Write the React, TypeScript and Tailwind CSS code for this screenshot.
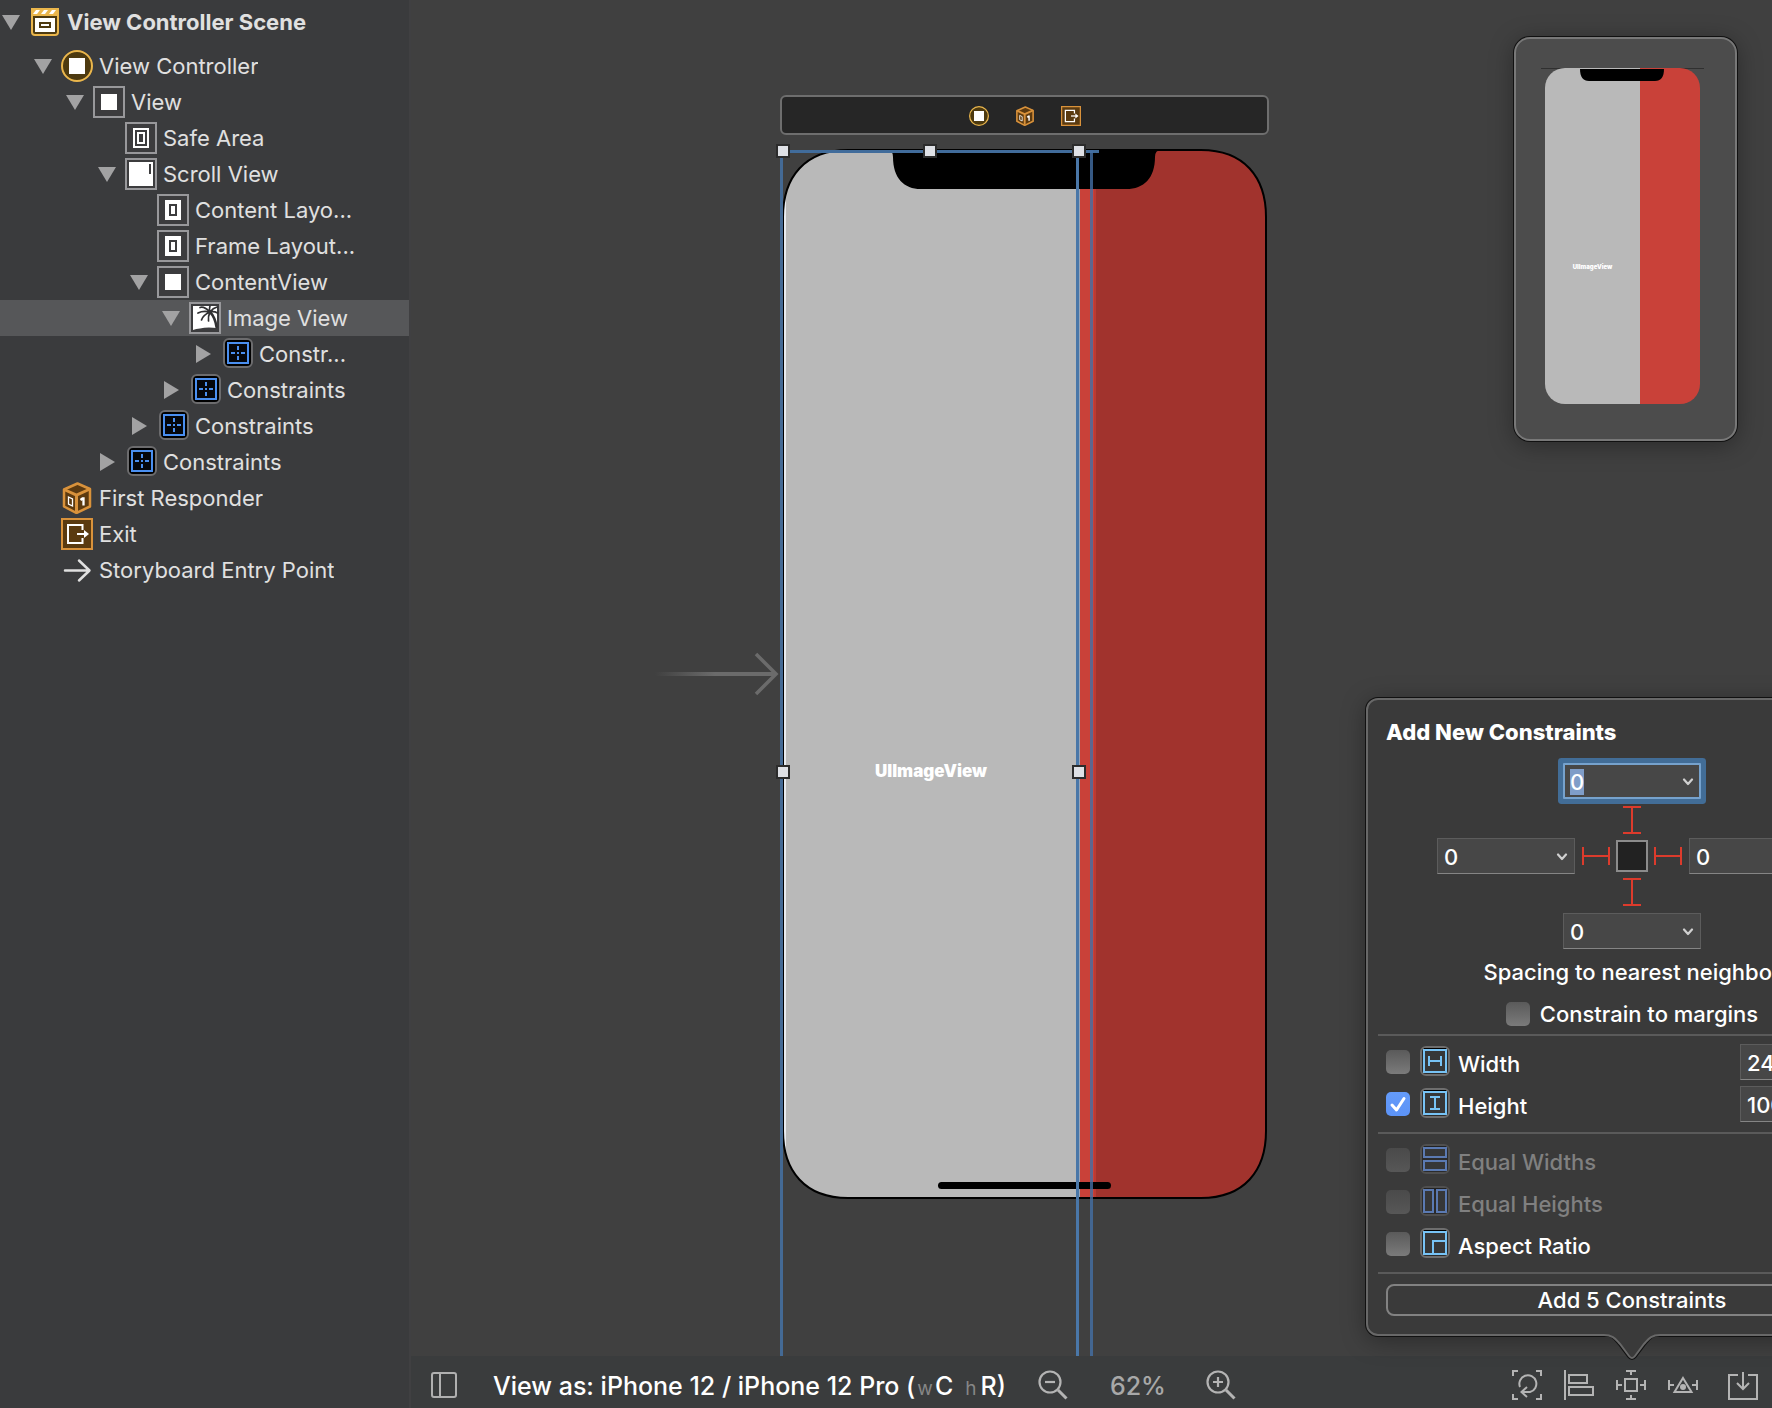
import { useEffect, useRef } from "react";
import type { ReactNode } from "react";

type Kind =
  | "scene" | "controller" | "view" | "safe" | "scroll" | "guide" | "image"
  | "constraints" | "responder" | "exit" | "entry";

function Frame({ children }: { children: ReactNode }) {
  return (
    <>
      <rect x="1" y="1" width="30" height="30" fill="#3c3c3e" stroke="#98989b" strokeWidth="2" />
      {children}
    </>
  );
}

function CubeShape() {
  return (
    <>
      <path d="M16.500 1.500 L29 7 V24.500 L15.500 31 L3 24.500 V7.500 Z" fill="#5c3a10" stroke="#d9923b" strokeWidth="2.500" strokeLinejoin="round" />
      <path d="M3 7.500 L15.500 13 L29 7 M15.500 13 V30" fill="none" stroke="#d9923b" strokeWidth="3" />
      <path d="M7.500 15 L11.500 17 V24 L7.500 22 Z" fill="none" stroke="#fff" strokeWidth="1.300" />
      <path d="M19.500 18 L21.500 16.500 H22.500 V23.500" fill="none" stroke="#fff" strokeWidth="2.300" />
    </>
  );
}

function ExitShape() {
  return (
    <>
      <rect x="1" y="1" width="30" height="30" fill="#5a3a10" stroke="#d9923b" strokeWidth="2" />
      <path d="M21.500 12 V7 H7 V25 H21.500 V20" fill="none" stroke="#fff" strokeWidth="2" />
      <path d="M16 16 H26" fill="none" stroke="#fff" strokeWidth="2" />
      <path d="M23 12 L28 16 L23 20 Z" fill="#fff" />
    </>
  );
}

function ControllerShape() {
  return (
    <>
      <circle cx="16" cy="16" r="15" fill="#4d3a10" stroke="#eab64c" strokeWidth="2" />
      <rect x="8" y="8" width="16" height="16" fill="#fff" />
    </>
  );
}

const shapes: Record<Kind, ReactNode> = {
  scene: (
    <>
      <path d="M2 2 H30 V26 Q30 30 26 30 H6 Q2 30 2 26 Z" fill="#eab64c" />
      <path d="M4 8 L7 4 H11 L8 8 Z M12 8 L15 4 H19 L16 8 Z M20 8 L23 4 H27 L24 8 Z" fill="#fff" />
      <path d="M4 10 H28 V26 Q28 28 26 28 H6 Q4 28 4 26 Z" fill="#4d3a10" />
      <rect x="6" y="12" width="20" height="14" fill="#fff" />
      <rect x="11" y="17" width="10" height="4" fill="#fff" stroke="#4d3a10" strokeWidth="2" />
    </>
  ),
  controller: <ControllerShape />,
  view: <Frame><rect x="8" y="8" width="16" height="16" fill="#fff" /></Frame>,
  safe: (
    <Frame>
      <rect x="9" y="7" width="14" height="18" fill="none" stroke="#fff" strokeWidth="2" />
      <rect x="13" y="11" width="6" height="10" fill="none" stroke="#fff" strokeWidth="2" />
    </Frame>
  ),
  scroll: (
    <Frame>
      <rect x="4" y="4" width="24" height="24" fill="#fff" />
      <rect x="24" y="6" width="2" height="10" fill="#3c3c3e" />
    </Frame>
  ),
  guide: (
    <Frame>
      <rect x="8" y="6" width="16" height="20" fill="#fff" />
      <rect x="13" y="11" width="6" height="10" fill="#fff" stroke="#3c3c3e" strokeWidth="2" />
    </Frame>
  ),
  image: (
    <Frame>
      <path d="M4 4 H28 V26 L20 25.500 Q10 26 4 28 Z" fill="#fff" />
      <g fill="none" stroke="#303032" strokeLinecap="round">
        <path d="M21 10 Q26 15 27.500 25" strokeWidth="2.500" />
        <path d="M21 10 Q14 8.500 9 11 M21 10 Q14 13 12.500 18 M21 10 Q19 14 19.500 19 M21 10 Q15 4 11 5.500 M21 10 Q20 6 21 4 M21 10 Q24 6 28 5 M21 10 Q25 9 28.500 11" strokeWidth="1.700" />
      </g>
    </Frame>
  ),
  constraints: (
    <>
      <rect x="3" y="1" width="28" height="28" rx="5" fill="#000" stroke="#6c6c6e" strokeWidth="2" />
      <rect x="7" y="5" width="20" height="20" fill="#05070c" stroke="#4a8ff0" strokeWidth="2" />
      <path d="M17 8 V12 M17 18 V22 M10 15 H14 M20 15 H24 M16 15 H18" fill="none" stroke="#4a8ff0" strokeWidth="2" />
    </>
  ),
  responder: <CubeShape />,
  exit: <ExitShape />,
  entry: <path d="M4 16.500 H28 M18 6.500 L28.500 16.500 L18 26.500" fill="none" stroke="#e0e0e0" strokeWidth="2.500" strokeLinecap="round" strokeLinejoin="round" />,
};

type Node = { label: string; kind: Kind; indent: string; open?: boolean; selected?: boolean };

const nodes: Node[] = [
  { label: "View Controller", kind: "controller", indent: "pl-8", open: true },
  { label: "View", kind: "view", indent: "pl-16", open: true },
  { label: "Safe Area", kind: "safe", indent: "pl-24" },
  { label: "Scroll View", kind: "scroll", indent: "pl-24", open: true },
  { label: "Content Layo...", kind: "guide", indent: "pl-32" },
  { label: "Frame Layout...", kind: "guide", indent: "pl-32" },
  { label: "ContentView", kind: "view", indent: "pl-32", open: true },
  { label: "Image View", kind: "image", indent: "pl-40", open: true, selected: true },
  { label: "Constr...", kind: "constraints", indent: "pl-48", open: false },
  { label: "Constraints", kind: "constraints", indent: "pl-40", open: false },
  { label: "Constraints", kind: "constraints", indent: "pl-32", open: false },
  { label: "Constraints", kind: "constraints", indent: "pl-24", open: false },
  { label: "First Responder", kind: "responder", indent: "pl-8" },
  { label: "Exit", kind: "exit", indent: "pl-8" },
  { label: "Storyboard Entry Point", kind: "entry", indent: "pl-8" },
];

function Disclosure({ open, label }: { open?: boolean; label: string }) {
  if (open === undefined) return <span className="w-[29px] shrink-0" />;
  return (
    <button type="button" aria-label={`Toggle ${label}`} aria-expanded={open} className="w-[29px] shrink-0">
      <svg viewBox="0 0 29 20" className="block h-5 w-[29px]" fill="#a2a2a3">
        {open ? <path d="M2 3 H20 L11 18 Z" /> : <path d="M4 1 L19 10 L4 19 Z" />}
      </svg>
    </button>
  );
}

function TreeRow({ node }: { node: Node }) {
  return (
    <li className={`flex h-9 items-center ${node.indent} ${node.selected ? "bg-[#565759]" : ""}`}>
      <Disclosure open={node.open} label={node.label} />
      <svg viewBox="0 0 32 32" className="mr-1.5 size-8 shrink-0">{shapes[node.kind]}</svg>
      <span className="truncate">{node.label}</span>
    </li>
  );
}

function Sidebar() {
  return (
    <nav aria-label="Document outline" className="w-[411px] shrink-0 border-r-2 border-[#404042] bg-[#3a3b3d] pt-1 text-[22px] leading-9 text-[#e0e0e0]">
      <div className="mb-2 flex h-9 items-center font-bold">
        <Disclosure open label="View Controller Scene" />
        <svg viewBox="0 0 32 32" className="mr-1.5 size-8 shrink-0">{shapes.scene}</svg>
        <span>View Controller Scene</span>
      </div>
      <ul>
        {nodes.map((n, i) => <TreeRow key={i} node={n} />)}
      </ul>
    </nav>
  );
}

function Phone() {
  return (
    <svg viewBox="0 0 486 1050" className="block h-[1050px] w-[486px]">
      <defs>
        <clipPath id="screen">
          <path id="outline" d="M66 1 H419 C462 1 484 28 484 68 V982 C484 1022 462 1049 419 1049 H66 C23 1049 1 1022 1 982 V68 C1 28 23 1 66 1 Z" />
        </clipPath>
      </defs>
      <g clipPath="url(#screen)">
        <rect width="486" height="1050" fill="#b9b9b9" />
        <rect x="1" width="3" height="1050" fill="#e8ebf0" />
        <rect x="296" width="2" height="1050" fill="#9aa4b5" />
        <rect x="298" width="16" height="1050" fill="#c94139" />
        <rect x="312" width="2" height="1050" fill="#bb3a33" />
        <rect x="314" width="172" height="1050" fill="#a1332d" />
        <path d="M105 0 V1 Q111 1 111 8 C111 30 123 41 141 40 H342 C361 41 373 30 373 8 Q373 1 379 1 V0 Z" fill="#000" />
        <rect x="156" y="1033" width="173" height="7" rx="3.500" fill="#000" />
      </g>
      <use href="#outline" fill="none" stroke="#000" strokeWidth="2" />
    </svg>
  );
}

function Handle({ place }: { place: string }) {
  return <span className={`absolute size-[14px] border-2 border-[#2c2c2c] bg-[#dfe1e6] ${place}`} />;
}

function Canvas() {
  return (
    <section aria-label="Canvas" className="relative flex-1 overflow-hidden bg-[#404040]">
      <div className="absolute left-[369px] top-[95px] flex h-10 w-[489px] items-center justify-center gap-[26px] rounded-md border-2 border-[#6e6e6e] bg-[#262626] pt-px">
        <svg viewBox="0 0 32 32" className="size-5"><ControllerShape /></svg>
        <svg viewBox="0 0 32 32" className="size-5"><CubeShape /></svg>
        <svg viewBox="0 0 32 32" className="size-5"><ExitShape /></svg>
      </div>
      <svg viewBox="0 0 124 44" className="absolute left-[244px] top-[652px] h-11 w-[124px]">
        <defs>
          <linearGradient id="fade"><stop offset="0" stopColor="#6b6b6b" stopOpacity="0" /><stop offset="0.500" stopColor="#6b6b6b" /></linearGradient>
        </defs>
        <rect y="20" width="120" height="4" fill="url(#fade)" />
        <path d="M101 2 L121 22 L101 42" fill="none" stroke="#6b6b6b" strokeWidth="3.500" />
      </svg>
      <div className="absolute left-[371px] top-[149px]"><Phone /></div>
      <div className="absolute left-[372px] top-[759px] w-[296px] text-center text-[17px] leading-6 font-black text-white">UIImageView</div>
      <span className="absolute left-[369px] top-[150px] h-[3px] w-[319px] bg-[#416c9b]" />
      <span className="absolute bottom-0 left-[369px] top-[150px] w-[3px] bg-[#446a95]" />
      <span className="absolute bottom-0 left-[665px] top-[150px] w-[3px] bg-[#4a77a8]" />
      <span className="absolute bottom-0 left-[679px] top-[150px] w-[3px] bg-[#446fa5]/80" />
      <Handle place="left-[365px] top-[144px]" />
      <Handle place="left-[512px] top-[144px]" />
      <Handle place="left-[661px] top-[144px]" />
      <Handle place="left-[365px] top-[765px]" />
      <Handle place="left-[661px] top-[765px]" />
      <Minimap />
    </section>
  );
}

function Minimap() {
  return (
    <div className="absolute right-[35px] top-[37px] flex h-[404px] w-[223px] rounded-2xl border-2 border-[#787878] bg-[#4c4c4c] pl-[25px] pt-7 shadow-[0_0_0_1px_#111,0_4px_24px_rgba(0,0,0,0.35)]">
      <div className="relative h-[337px]">
        <svg viewBox="0 0 163 337" className="block h-[337px] w-[163px]">
          <defs><clipPath id="mini"><rect x="4" y="1" width="155" height="336" rx="20" /></clipPath></defs>
          <path d="M0 1.500 H163" stroke="#303030" />
          <g clipPath="url(#mini)">
            <rect width="100" height="337" fill="#b9b9b9" />
            <rect x="99" width="64" height="337" fill="#c94139" />
            <path d="M39 2 H123 C123 10 120 14 114 14 H48 C42 14 39 10 39 2 Z" fill="#000" />
          </g>
        </svg>
        <span className="absolute left-0 top-[195px] w-[103px] text-center text-[6px] leading-[10px] font-black text-white">UIImageView</span>
      </div>
    </div>
  );
}

function Field({ label, value, focused }: { label: string; value: string; focused?: boolean }) {
  const ref = useRef<HTMLInputElement>(null);
  useEffect(() => {
    if (focused) {
      ref.current?.focus({ preventScroll: true });
      ref.current?.select();
    }
  }, [focused]);
  const edge = focused
    ? "border-2 border-[#76a2cd] px-[5px] shadow-[0_0_0_5px_#426d97] rounded-[1px]"
    : "border border-[#5c5c5c] border-b-[#858585] px-1.5";
  return (
    <div className={`flex h-9 w-[138px] shrink-0 items-center bg-[#474747] ${edge}`}>
      <input ref={ref} aria-label={label} defaultValue={value} className="h-full w-full min-w-0 bg-transparent pt-0.5 text-[22px] leading-7 font-medium text-white outline-none selection:bg-[#7f9dc8] selection:text-white" />
      <button type="button" aria-label={`${label} options`} className="flex shrink-0 items-center pt-0.5">
        <svg viewBox="0 0 12 8" className="h-2 w-3"><path d="M2 1.500 L6 6 L10 1.500" fill="none" stroke="#d0d0d0" strokeWidth="2.200" strokeLinecap="round" strokeLinejoin="round" /></svg>
      </button>
    </div>
  );
}

function Strut({ side }: { side: "top" | "bottom" | "left" | "right" }) {
  const paths = {
    top: "M0 8 H18 M0 34 H18 M9 8 V34",
    bottom: "M0 5 H18 M0 31 H18 M9 5 V31",
    left: "M8 0 V18 M34 0 V18 M8 9 H34",
    right: "M7 0 V18 M33 0 V18 M7 9 H33",
  };
  const upright = side === "top" || side === "bottom";
  return (
    <svg viewBox={upright ? "0 0 18 39" : "0 0 41 18"} className={upright ? "h-[39px] w-[18px]" : "h-[18px] w-[41px]"}>
      <path d={paths[side]} fill="none" stroke="#dc3b2c" strokeWidth="2" />
    </svg>
  );
}

function Check({ id, checked, disabled }: { id: string; checked?: boolean; disabled?: boolean }) {
  return (
    <span className="grid size-6 shrink-0">
      <input id={id} type="checkbox" defaultChecked={checked} disabled={disabled} className="peer col-start-1 row-start-1 size-6 appearance-none rounded-[5px] bg-linear-to-b from-[#5a5a5a] to-[#7b7b7b] checked:from-[#649bfa] checked:to-[#5c93f6] disabled:from-[#4a4a4a] disabled:to-[#575757]" />
      <svg viewBox="0 0 24 24" className="pointer-events-none invisible col-start-1 row-start-1 size-6 peer-checked:visible">
        <path d="M6 13 L10.500 18 L18 6.500" fill="none" stroke="#fff" strokeWidth="3" strokeLinecap="round" strokeLinejoin="round" />
      </svg>
    </span>
  );
}

function RuleIcon({ d, dim }: { d: string; dim?: boolean }) {
  return (
    <svg viewBox="0 0 30 30" className="mb-0.5 size-[30px] shrink-0">
      <rect x="1" y="1" width="28" height="28" rx="5" fill="#2b2b2b" stroke={dim ? "#505050" : "#6e6e6e"} strokeWidth="2" />
      <path d="M4 3 H26" stroke={dim ? "#222" : "#000"} strokeWidth="2" />
      <path d={d} fill="#363738" stroke={dim ? "#5b7ab2" : "#77c3f5"} strokeWidth="2" />
    </svg>
  );
}

const BOX = "M4 4 H26 V26 H4 Z";

function RuleRow({ id, label, d, checked, disabled, value }: { id: string; label: string; d: string; checked?: boolean; disabled?: boolean; value?: string }) {
  return (
    <div className="flex h-[42px] items-center">
      <Check id={id} checked={checked} disabled={disabled} />
      <span className="w-2.5" />
      <RuleIcon d={d} dim={disabled} />
      <label htmlFor={id} className={`ml-2 flex-1 pt-1 ${disabled ? "text-[#808080]" : "text-white"}`}>{label}</label>
      {value && <Field label={`${label} value`} value={value} />}
    </div>
  );
}

function Popover() {
  return (
    <div className="absolute bottom-[72px] right-[-126px] w-[532px] rounded-xl border-2 border-[#686868] bg-[#3a3a3a] px-[18px] pb-[18px] pt-4 text-[22px] leading-8 font-medium text-white shadow-[0_0_0_1px_#111,0_4px_24px_rgba(0,0,0,0.35)]">
      <h2 className="font-extrabold">Add New Constraints</h2>
      <div className="mt-[15px] flex flex-col items-center">
        <Field label="Top" value="0" focused />
        <Strut side="top" />
        <div className="flex items-center">
          <Field label="Leading" value="0" />
          <Strut side="left" />
          <span className="size-8 border-2 border-[#8c8c8c] bg-[#222]" />
          <Strut side="right" />
          <Field label="Trailing" value="0" />
        </div>
        <Strut side="bottom" />
        <Field label="Bottom" value="0" />
        <p className="mt-[7px]">Spacing to nearest neighbor</p>
        <div className="mt-2.5 flex items-center gap-2.5">
          <Check id="margins" />
          <label htmlFor="margins">Constrain to margins</label>
        </div>
      </div>
      <hr className="-mx-2 mt-1 border-t-2 border-[#5a5a5a]" />
      <div className="mt-[5px] mb-[7px]">
        <RuleRow id="width" label="Width" value="248" d={BOX + " M9 10 V20 M21 10 V20 M9 15 H21"} />
        <RuleRow id="height" label="Height" value="1000" checked d={BOX + " M10 9 H20 M10 21 H20 M15 9 V21"} />
      </div>
      <hr className="-mx-2 border-t-2 border-[#5a5a5a]" />
      <div className="mt-[5px] mb-[7px]">
        <RuleRow id="eqw" label="Equal Widths" disabled d="M4 4 H26 V13 H4 Z M4 17 H26 V26 H4 Z" />
        <RuleRow id="eqh" label="Equal Heights" disabled d="M4 4 H13 V26 H4 Z M17 4 H26 V26 H17 Z" />
        <RuleRow id="ratio" label="Aspect Ratio" d={BOX + " M13 26 V13 H26"} />
      </div>
      <hr className="-mx-2 border-t-2 border-[#5a5a5a]" />
      <button type="button" className="mt-[10px] block h-8 w-full rounded-lg border-2 border-[#828282] text-center leading-7">Add 5 Constraints</button>
      <svg viewBox="0 0 60 28" className="absolute left-[234px] top-full h-7 w-[60px]">
        <path d="M0 0 H2 C12 0 14 6 18 10 L27 22 Q30 26 33 22 L42 10 C46 6 48 0 58 0 H60" fill="#3a3a3a" stroke="#111" strokeWidth="4" />
        <path d="M0 -2 V1 H2 C12 1 14 6 18 10 L27 22 Q30 26 33 22 L42 10 C46 6 48 1 58 1 H60 V-2 Z" fill="#3a3a3a" stroke="#686868" strokeWidth="2" />
      </svg>
    </div>
  );
}

function BarButton({ label, d, dot, wide }: { label: string; d: string; dot?: boolean; wide?: boolean }) {
  return (
    <button type="button" aria-label={label} className={wide ? "ml-2" : ""}>
      <svg viewBox="0 0 30 30" className="size-[30px]" fill="none" stroke="#b4b4b4" strokeWidth="2">
        <path d={d} />
        {dot && <circle cx="15" cy="17" r="3" fill="#b4b4b4" stroke="none" />}
      </svg>
    </button>
  );
}

function BottomBar() {
  return (
    <footer className="flex h-[52px] shrink-0 items-center bg-[#3a3c3d] pl-5 pr-[14px] pt-1.5">
      <button type="button" aria-label="Toggle outline">
        <svg viewBox="0 0 26 26" className="size-[26px]" fill="none" stroke="#b0b0b0" strokeWidth="2"><rect x="1" y="1" width="24" height="24" rx="2" /><path d="M9 1 V25" /></svg>
      </button>
      <button type="button" className="ml-9 pt-1 text-[25px] leading-8 font-medium whitespace-pre text-white">
        View as: iPhone 12 / iPhone 12 Pro (<span className="mx-0.5 text-[19px] font-normal text-[#868686]">w</span>C <span className="mr-1 text-[19px] font-normal text-[#868686]"> h</span>R)
      </button>
      <button type="button" aria-label="Zoom out" className="ml-8">
        <svg viewBox="0 0 30 30" className="size-[30px]" fill="none" stroke="#b4b4b4" strokeWidth="2.200"><circle cx="12" cy="12" r="10.500" /><path d="M7 12 H17" /><path d="M20 20 L28.500 28.500" strokeWidth="3" /></svg>
      </button>
      <span className="ml-[42px] pt-0.5 text-[25px] leading-8 font-medium text-[#a8a8a8]">62%</span>
      <button type="button" aria-label="Zoom in" className="ml-10">
        <svg viewBox="0 0 30 30" className="size-[30px]" fill="none" stroke="#b4b4b4" strokeWidth="2.200"><circle cx="12" cy="12" r="10.500" /><path d="M7 12 H17 M12 7 V17" /><path d="M20 20 L28.500 28.500" strokeWidth="3" /></svg>
      </button>
      <div className="ml-auto flex gap-[22px]">
        <BarButton label="Update frames" d="M1 6 V1 H6 M24 1 H29 V6 M29 24 V29 H24 M6 29 H1 V24 M8 17 A8.500 8.500 0 1 1 18 22 L10 22 M15 17 L9.500 22 L15 27" />
        <BarButton label="Align" d="M1 0 V30 M5 5 H23 V13 H5 Z M5 17 H29 V25 H5 Z" />
        <BarButton label="Add new constraints" d="M9 9 H21 V21 H9 Z M15 1 V5 M10 1 H20 M15 25 V29 M10 29 H20 M1 10 V20 M1 15 H6 M29 10 V20 M24 15 H29" />
        <BarButton label="Resolve layout issues" dot d="M15 8 L23.500 22 H6.500 Z M1 10 V20 M1 15 H6 M29 10 V20 M24 15 H29" />
        <BarButton wide label="Embed in" d="M10 5 H1 V29 H29 V5 H20 M15 2 V19 M9 13 L15 19 L21 13" />
      </div>
    </footer>
  );
}

export default function App() {
  return (
    <div className="relative flex h-screen overflow-hidden bg-[#404040] font-['Inter',sans-serif]">
      <Sidebar />
      <main className="flex min-w-0 flex-1 flex-col">
        <Canvas />
        <BottomBar />
      </main>
      <Popover />
    </div>
  );
}
